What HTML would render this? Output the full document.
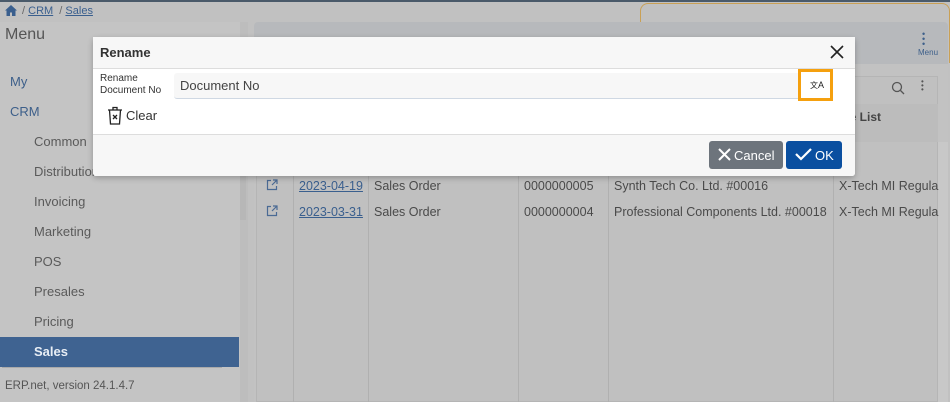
<!DOCTYPE html>
<html><head><meta charset="utf-8"><style>
*{box-sizing:border-box;margin:0;padding:0}
body{width:950px;height:402px;overflow:hidden;background:#c1c1c1;font-family:"Liberation Sans",sans-serif;position:relative;font-size:13px;color:#444}
.a{position:absolute}
.menu div{position:absolute;left:34px;color:#5a5a5a;font-size:13px}
.cell{position:absolute;font-size:12.5px;color:#4a4a4a;white-space:nowrap}
.vl{position:absolute;top:142px;bottom:0;width:1px;background:#b0b0b0}
</style></head><body>
<div class="a" style="left:0;top:0;width:950px;height:2px;background:#4a5a6a"></div>
<svg class="a" style="left:5px;top:5px" width="12" height="11" viewBox="0 0 12 11"><path d="M6 0L0 5.5h1.5V11h3.5V7.5h2V11h3.5V5.5H12z" fill="#3a5f8e"/></svg>
<div class="a" style="left:22px;top:5px;font-size:11px;color:#666">/ <u style="color:#3a5f8e">CRM</u> &nbsp;/ <u style="color:#3a5f8e">Sales</u></div>
<div class="a" style="left:0;top:22px;width:240px;height:380px;background:#c4c4c4"></div>
<div class="a" style="left:240px;top:22px;width:8px;height:380px;background:#bdbdbd"></div>
<div class="a" style="left:240px;top:60px;width:6px;height:160px;background:#b7b7b7"></div>
<div class="a" style="left:5px;top:26px;font-size:16px;color:#555">Menu</div>
<div class="a" style="left:10px;top:74px;color:#3d5f8a">My</div>
<div class="a" style="left:10px;top:104px;color:#3d5f8a">CRM</div>
<div class="menu">
<div style="top:134px">Common</div><div style="top:164px">Distribution</div><div style="top:194px">Invoicing</div><div style="top:224px">Marketing</div><div style="top:254px">POS</div><div style="top:284px">Presales</div><div style="top:314px">Pricing</div></div>
<div class="a" style="left:0;top:337px;width:239px;height:30px;background:#3f6391"></div>
<div class="a" style="left:34px;top:344px;color:#e8eef5;font-weight:bold">Sales</div>
<div class="a" style="left:2px;top:367px;width:220px;height:1px;background:#aaa"></div>
<div class="a" style="left:5px;top:380px;font-size:11.5px;color:#555">ERP.net, version 24.1.4.7</div>
<div class="a" style="left:640px;top:3px;width:310px;height:60px;border:1.5px solid #c9a055;border-bottom:none;border-radius:8px 8px 0 0"></div>
<div class="a" style="left:254px;top:22px;width:694px;height:42px;background:#b7b9bc;border-radius:4px 4px 0 0"></div>
<div class="a" style="left:922px;top:32px;color:#3d5f8a;font-size:9px;text-align:center;line-height:5px">•<br>•<br>•</div>
<div class="a" style="left:918px;top:48px;color:#3d5f8a;font-size:8px">Menu</div>
<div class="a" style="left:254px;top:64px;width:694px;height:338px;background:#c2c2c2"></div>
<div class="a" style="left:256px;top:76px;width:682px;height:326px;background:#c0c0c0;border:1px solid #b5b5b5"></div>
<svg class="a" style="left:891px;top:81px" width="14" height="14" viewBox="0 0 14 14" fill="none" stroke="#555" stroke-width="1.3"><circle cx="6" cy="6" r="4.5"/><path d="M9.5 9.5L13 13"/></svg>
<div class="a" style="left:921px;top:80px;color:#555;font-size:8px;line-height:4px">•<br>•<br>•</div>
<div class="a" style="left:256px;top:104px;width:682px;height:38px;background:#bcbcbc"></div>
<div class="a" style="left:843px;top:110px;font-size:12px;font-weight:bold;color:#444">ce List</div>
<div class="a" style="left:938px;top:142px;width:10px;height:260px;background:#c8c8c8"></div>
<div class="vl" style="left:293px"></div><div class="vl" style="left:368px"></div><div class="vl" style="left:518px"></div><div class="vl" style="left:608px"></div><div class="vl" style="left:833px"></div>
<svg class="a" style="left:266px;top:179px" width="12" height="12" viewBox="0 0 12 12" fill="none" stroke="#4a6a94" stroke-width="1.2"><path d="M5 1.5H1.5v9h9V7M7 1h4v4M11 1L6 6"/></svg>
<svg class="a" style="left:266px;top:205px" width="12" height="12" viewBox="0 0 12 12" fill="none" stroke="#4a6a94" stroke-width="1.2"><path d="M5 1.5H1.5v9h9V7M7 1h4v4M11 1L6 6"/></svg>
<div class="cell" style="left:299px;top:179px;color:#3a5f8e;text-decoration:underline">2023-04-19</div>
<div class="cell" style="left:374px;top:179px">Sales Order</div>
<div class="cell" style="left:524px;top:179px">0000000005</div>
<div class="cell" style="left:614px;top:179px">Synth Tech Co. Ltd. #00016</div>
<div class="cell" style="left:839px;top:179px">X-Tech MI Regula</div>
<div class="cell" style="left:299px;top:205px;color:#3a5f8e;text-decoration:underline">2023-03-31</div>
<div class="cell" style="left:374px;top:205px">Sales Order</div>
<div class="cell" style="left:524px;top:205px">0000000004</div>
<div class="cell" style="left:614px;top:205px">Professional Components Ltd. #00018</div>
<div class="cell" style="left:839px;top:205px">X-Tech MI Regula</div>

<div class="a" style="left:93px;top:37px;width:762px;height:139px;background:#fff;border-radius:3px;box-shadow:0 2px 6px rgba(0,0,0,.25)">
 <div class="a" style="left:0;top:0;width:762px;height:32px;background:#f7f7f7;border-bottom:1px solid #ddd"></div>
 <div class="a" style="left:7px;top:8px;font-size:13px;font-weight:bold;color:#333">Rename</div>
 <svg class="a" style="left:737px;top:8px" width="14" height="14" viewBox="0 0 14 14" stroke="#222" stroke-width="1.6"><path d="M1 1L13 13M13 1L1 13"/></svg>
 <div class="a" style="left:7px;top:36px;font-size:10px;line-height:12px;color:#333">Rename<br>Document No</div>
 <div class="a" style="left:81px;top:36px;width:658px;height:26px;background:#f7f7f7;border-bottom:1px solid #cfd8e3;border-radius:3px"></div>
 <div class="a" style="left:87px;top:41px;font-size:13px;color:#444">Document No</div>
 <div class="a" style="left:705px;top:32px;width:35px;height:32px;border:3px solid #f5a00e;background:#fff"></div>
 <div class="a" style="left:717px;top:43px;font-size:8px;color:#222;font-family:'Noto Sans CJK SC',sans-serif;line-height:10px">文<span style="font-family:'Liberation Sans';font-size:9px">A</span></div>
 <svg class="a" style="left:14px;top:69px" width="16" height="19" viewBox="0 0 16 19" fill="none" stroke="#222" stroke-width="1.3"><path d="M1 4h14M6 4V1.5h4V4M2.5 4l1 14h9l1-14M6 9l4 4M10 9l-4 4"/></svg>
 <div class="a" style="left:33px;top:71px;font-size:13px;color:#333">Clear</div>
 <div class="a" style="left:0;top:97px;width:762px;height:42px;background:#f7f7f7;border-top:1px solid #ddd;border-radius:0 0 3px 3px"></div>
 <div class="a" style="left:616px;top:104px;width:74px;height:28px;background:#6d747c;border-radius:3px;color:#fff;font-size:13px;padding:7px 0 0 25px">Cancel</div>
 <svg class="a" style="left:625px;top:111px" width="13" height="13" viewBox="0 0 13 13" stroke="#fff" stroke-width="2"><path d="M1 1L12 12M12 1L1 12"/></svg>
 <div class="a" style="left:693px;top:104px;width:56px;height:28px;background:#0a4fa0;border-radius:3px;color:#fff;font-size:13px;padding:7px 0 0 29px">OK</div>
 <svg class="a" style="left:702px;top:111px" width="17" height="13" viewBox="0 0 17 13" fill="none" stroke="#fff" stroke-width="2.2"><path d="M1 6l5 5L16 1"/></svg>
</div>
</body></html>
